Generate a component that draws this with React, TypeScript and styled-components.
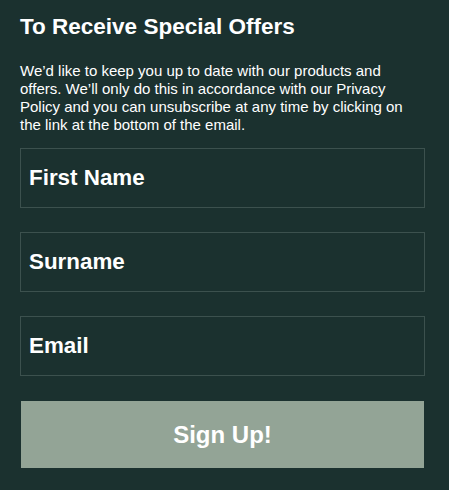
import * as React from "react";
import styled, {createGlobalStyle} from "styled-components";

const GlobalStyle = createGlobalStyle`
  html, body {
    margin: 0;
    padding: 0;
    background: #1b312f;
  }
  body {
    font-family: "Liberation Sans", Arial, sans-serif;
  }
`;

const Panel = styled.div`
  display: flex;
  flex-direction: column;
  padding: 14px 24px 22px 20px;
  background: #1b312f;
  color: #ffffff;
`;

const Heading = styled.h2`
  margin: 0;
  font-size: 22.5px;
  line-height: 25px;
  font-weight: bold;
`;

const Blurb = styled.p`
  margin: 23px 0 14px;
  font-size: 15px;
  line-height: 18px;
`;

const Form = styled.form`
  display: flex;
  flex-direction: column;
  gap: 24px;
`;

const Field = styled.input`
  box-sizing: border-box;
  width: 100%;
  height: 60px;
  margin: 0;
  padding: 0 8px;
  border: 1px solid #3c514e;
  background: transparent;
  color: #ffffff;
  font-family: inherit;
  font-size: 22.4px;
  font-weight: bold;
  outline: none;
  &::placeholder {
    color: #ffffff;
    opacity: 1;
  }
`;

const SubmitButton = styled.button`
  height: 67px;
  margin: 1px 1px 0;
  border: none;
  background: #93a496;
  color: #ffffff;
  font-family: inherit;
  font-size: 24px;
  font-weight: bold;
  cursor: pointer;
`;

const App = () =>
    <>
        <GlobalStyle/>
        <Panel>
            <Heading>To Receive Special Offers</Heading>
            <Blurb>
                We’d like to keep you up to date with our products and offers. We’ll only do this in accordance
                with our Privacy Policy and you can unsubscribe at any time by clicking on the link at the bottom
                of the email.
            </Blurb>
            <Form onSubmit={(e) => e.preventDefault()}>
                <Field type="text" placeholder="First Name"/>
                <Field type="text" placeholder="Surname"/>
                <Field type="email" placeholder="Email"/>
                <SubmitButton type="submit">Sign Up!</SubmitButton>
            </Form>
        </Panel>
    </>;

export default App;
